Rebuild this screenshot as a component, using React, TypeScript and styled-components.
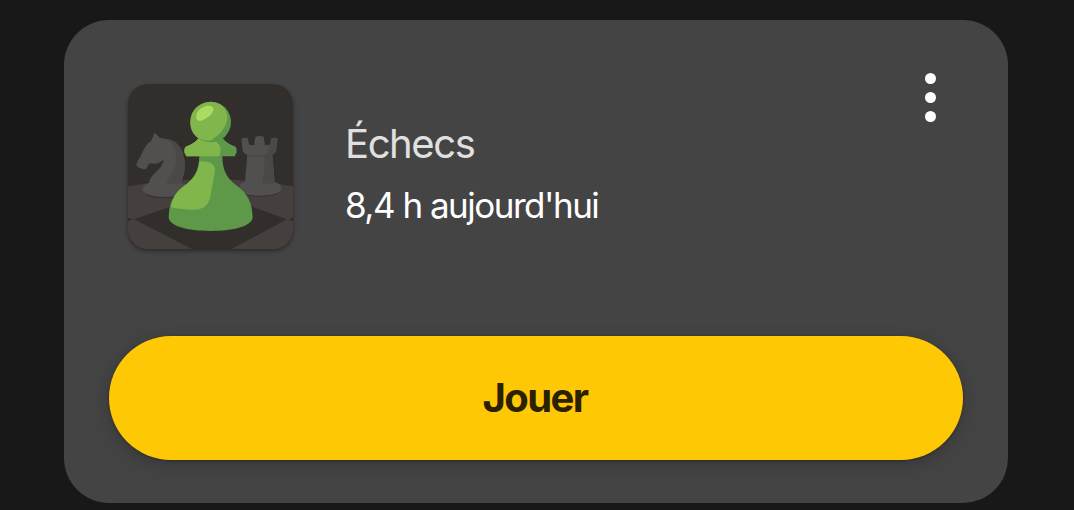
import styled, { createGlobalStyle } from "styled-components";

const GlobalStyle = createGlobalStyle`
  body {
    margin: 0;
    background: #181818;
    font-family: Inter, "Liberation Sans", sans-serif;
  }
`;

const Screen = styled.main`
  box-sizing: border-box;
  height: 510px;
  padding: 20px 66px 0 64px;
  overflow: hidden;
`;

const Card = styled.section`
  box-sizing: border-box;
  display: flex;
  flex-direction: column;
  justify-content: space-between;
  height: 483px;
  padding: 53px 45px 43px;
  border-radius: 45px;
  background: #444444;
`;

const Header = styled.header`
  display: flex;
  align-items: flex-start;
  padding: 0 27px 0 19px;
`;

const GameIcon = styled.svg`
  flex: none;
  width: 165px;
  height: 165px;
  margin-top: 11px;
  border-radius: 20px;
  box-shadow: 0 2px 4px rgba(0, 0, 0, 0.4);
`;

const GameInfo = styled.div`
  display: flex;
  flex: 1;
  flex-direction: column;
  gap: 13px;
  margin: 47px 0 0 52px;
`;

const GameTitle = styled.h1`
  margin: 0;
  color: #e0e0e0;
  font-size: 40px;
  font-weight: 400;
  line-height: 48px;
  letter-spacing: -1.4px;
`;

const PlayTime = styled.span`
  color: #ffffff;
  font-size: 35px;
  line-height: 48px;
  letter-spacing: -1.5px;
`;

const MenuButton = styled.button`
  display: flex;
  flex-direction: column;
  gap: 8px;
  padding: 0;
  border: 0;
  background: none;
`;

const Dot = styled.span`
  width: 11px;
  height: 11px;
  border-radius: 50%;
  background: #ffffff;
`;

const PlayButton = styled.button`
  height: 124px;
  padding: 0 2px 0 0;
  border: 0;
  border-radius: 62px;
  background: #ffc804;
  box-shadow: 0 4px 20px rgba(0, 0, 0, 0.2), 0 1px 3px rgba(0, 0, 0, 0.25);
  color: #2b2000;
  font-family: inherit;
  font-size: 40px;
  font-weight: 700;
  line-height: 48px;
  letter-spacing: -1.6px;
`;

function ChessIcon() {
  return (
    <GameIcon viewBox="24 24 495 495" aria-hidden="true">
      <rect x="24" y="24" width="495" height="495" fill="#312e2b" />
      {/* board */}
      <path d="M24 331Q145 310 272 310T519 331V519H24Z" fill="#45403d" />
      <path d="M24 425L38 430L24 436ZM519 425L506 430L519 436Z" fill="#312e2b" />
      <path d="M42 430L166 387H382L501 430L334 519H216Z" fill="#312e2b" />
      {/* knight */}
      <path d="M70 342Q72 368 133 366H200V345Z" fill="#35312f" />
      <path
        d="M104 170L120 186C157 187 185 213 193 252C198 280 190 302 182 320Q205 326 205 343Q202 363 137 363Q72 362 68 342Q68 326 88 320C90 293 128 284 131 250C121 264 104 265 88 262L78 278Q69 282 64 277Q53 276 49 266Q50 257 61 242C74 215 76 207 94 194Z"
        fill="#52504e"
      />
      <path
        d="M142 188C175 195 190 220 193 252C198 280 190 302 182 325H139C145 299 168 283 168 248Q168 211 142 188Z"
        fill="#4b4947"
      />
      {/* rook */}
      <path d="M358 345H482Q473 362 420 362Q370 362 358 345Z" fill="#35312f" />
      <path
        d="M364 188Q373 183 384 187L387 206L402 208L406 183Q419 177 431 182L435 208L450 206L454 187Q465 183 473 187L468 226Q466 233 457 237L464 318Q484 323 484 341Q477 358 420 359Q364 358 356 342Q354 325 375 317L382 236Q370 232 368 224Z"
        fill="#52504e"
      />
      <path
        d="M457 187Q465 183 473 187L468 226Q466 233 457 237L464 320Q447 325 425 320Q436 286 433 238Q444 234 446 208L451 206Z"
        fill="#4b4947"
      />
      <path d="M382 235Q419 242 457 235V240Q419 246 382 240Z" fill="#494745" />
      {/* pawn */}
      <path
        d="M238 239C237 284 222 307 195 328C158 355 148 382 146 424C147 450 202 465 272 465S397 450 398 424C396 382 386 355 349 328C322 307 307 284 307 239Z"
        fill="#5d9948"
      />
      <path
        d="M238 256Q286 254 285 284L270 367Q262 400 224 401Q183 401 153 394C158 362 172 344 195 328C222 307 237 287 238 256Z"
        fill="#81b64c"
      />
      <path
        d="M236 186Q225 202 197 212Q191 219 193 229L199 241H344L350 229Q352 219 347 212Q319 202 308 186Z"
        fill="#5d9948"
      />
      <path
        d="M236 186Q225 202 197 212Q191 219 193 229L199 241H299Q303 224 300 210Q291 198 279 187Z"
        fill="#81b64c"
      />
      <circle cx="272" cy="138" r="61" fill="#5d9948" />
      <path
        d="M303 86C334 112 328 154 280 188Q272 199 241 190C216 176 211 157 211 138A61 61 0 0 1 303 86Z"
        fill="#81b64c"
      />
      <path
        d="M234 106C246 91 266 86 277 92C286 99 276 115 264 123C251 131 244 137 236 134C227 131 226 119 234 106Z"
        fill="#abdc62"
      />
    </GameIcon>
  );
}

export default function App() {
  return (
    <>
      <GlobalStyle />
      <Screen>
        <Card>
          <Header>
            <ChessIcon />
            <GameInfo>
              <GameTitle>Échecs</GameTitle>
              <PlayTime>8,4 h aujourd'hui</PlayTime>
            </GameInfo>
            <MenuButton aria-label="Options">
              <Dot />
              <Dot />
              <Dot />
            </MenuButton>
          </Header>
          <PlayButton>Jouer</PlayButton>
        </Card>
      </Screen>
    </>
  );
}
